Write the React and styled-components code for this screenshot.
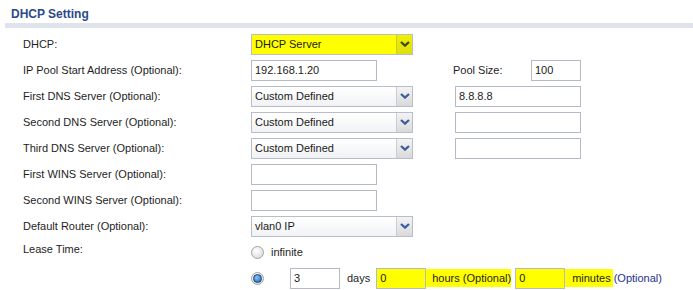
import * as React from "react"
import styled, { createGlobalStyle } from "styled-components"

const GlobalStyle = createGlobalStyle`
    body {
        margin: 0;
        background: #ffffff;
        font-family: "Liberation Sans", Arial, sans-serif;
        font-size: 11px;
        color: #1e1e1e;
    }
`

const Page = styled.div`
    width: 693px;
    height: 290px;
    overflow: hidden;
`

const Title = styled.div`
    height: 16px;
    padding: 7px 0 0 11px;
    font-size: 12px;
    line-height: 14px;
    font-weight: bold;
    color: #2b4a8c;
`

const TitleBar = styled.div`
    margin-left: 5px;
    height: 5px;
    background: #dfe3eb;
`

const Rows = styled.div`
    padding-top: 3px;
`

const Row = styled.div`
    display: flex;
    align-items: center;
    height: 26px;
`

const Label = styled.div`
    flex: 0 0 251px;
    box-sizing: border-box;
    padding-left: 23px;
    line-height: 13px;
    align-self: ${p => (p.$top ? `flex-start` : `center`)};
    padding-top: ${p => (p.$top ? `4px` : `0`)};
`

const ControlCell = styled.div`
    flex: 0 0 202px;
    display: flex;
    align-items: center;
`

const SideCell = styled.div`
    display: flex;
    align-items: center;
`

const SideLabel = styled.div`
    width: 78px;
`

const Input = styled.div`
    box-sizing: border-box;
    width: ${p => p.$w || 126}px;
    height: 21px;
    margin-left: ${p => p.$ml || 0}px;
    padding-left: 3px;
    display: flex;
    align-items: center;
    border: 1px solid #b5b9c9;
    background: ${p => (p.$hl ? `#ffff00` : `#ffffff`)};
    color: #1a1a1a;
`

const SelectBox = styled.div`
    box-sizing: border-box;
    width: 162px;
    height: 21px;
    display: flex;
    border: 1px solid #b8bccb;
    background: ${p =>
        p.$hl ? `#ffff00` : `linear-gradient(#ffffff, #f1f2f4)`};
`

const SelectValue = styled.div`
    flex: 1;
    display: flex;
    align-items: center;
    padding-left: 3px;
    color: #1a1a1a;
`

const SelectArrow = styled.div`
    width: 15px;
    display: flex;
    align-items: center;
    justify-content: center;
    border-left: 1px solid ${p => (p.$hl ? `#c9c930` : `#c9ccd6`)};
    background: ${p =>
        p.$hl
            ? `linear-gradient(#f0f000, #dede10)`
            : `linear-gradient(#f4f4f4, #d9d9d9)`};
`

const Radio = styled.span`
    box-sizing: border-box;
    width: 13px;
    height: 13px;
    border-radius: 50%;
    border: 1px solid #a4a4a4;
    background: radial-gradient(circle at 40% 35%, #ffffff, #d4d4d4);
    display: flex;
    align-items: center;
    justify-content: center;
    margin-right: ${p => p.$mr}px;
`

const RadioDot = styled.span`
    width: 7px;
    height: 7px;
    border-radius: 50%;
    border: 1px solid #203c60;
    background: radial-gradient(circle at 40% 35%, #7fc4ff, #1566b8);
`

const Text = styled.span`
    margin: 0 ${p => p.$mr || 0}px 0 ${p => p.$ml || 0}px;
    color: ${p => (p.$blue ? `#26318a` : `#1e1e1e`)};
`

const Highlight = styled.span`
    display: flex;
    align-items: center;
    height: 18px;
    background: #ffff00;
    padding-right: ${p => p.$pr || 0}px;
`

const Chevron = ({ color }) => (
    <svg width="10" height="6" viewBox="0 0 10 6">
        <path d="M1 1 L5 4.6 L9 1" fill="none" stroke={color} strokeWidth="2.3" />
    </svg>
)

const Select = ({ value, hl }) => (
    <SelectBox $hl={hl}>
        <SelectValue>{value}</SelectValue>
        <SelectArrow $hl={hl}>
            <Chevron color={hl ? `#3c4a14` : `#3d5e9e`} />
        </SelectArrow>
    </SelectBox>
)

const dnsRows = [
    { label: `First DNS Server (Optional):`, ip: `8.8.8.8` },
    { label: `Second DNS Server (Optional):`, ip: `` },
    { label: `Third DNS Server (Optional):`, ip: `` },
]

const App = () => {
    return (
        <>
            <GlobalStyle />
            <Page>
                <Title>DHCP Setting</Title>
                <TitleBar />
                <Rows>
                    <Row>
                        <Label>DHCP:</Label>
                        <ControlCell>
                            <Select value="DHCP Server" hl />
                        </ControlCell>
                    </Row>
                    <Row>
                        <Label>IP Pool Start Address (Optional):</Label>
                        <ControlCell>
                            <Input>192.168.1.20</Input>
                        </ControlCell>
                        <SideCell>
                            <SideLabel>Pool Size:</SideLabel>
                            <Input $w={50}>100</Input>
                        </SideCell>
                    </Row>
                    {dnsRows.map(r => (
                        <Row key={r.label}>
                            <Label>{r.label}</Label>
                            <ControlCell>
                                <Select value="Custom Defined" />
                            </ControlCell>
                            <SideCell>
                                <Input $ml={2}>{r.ip}</Input>
                            </SideCell>
                        </Row>
                    ))}
                    <Row>
                        <Label>First WINS Server (Optional):</Label>
                        <ControlCell>
                            <Input />
                        </ControlCell>
                    </Row>
                    <Row>
                        <Label>Second WINS Server (Optional):</Label>
                        <ControlCell>
                            <Input />
                        </ControlCell>
                    </Row>
                    <Row>
                        <Label>Default Router (Optional):</Label>
                        <ControlCell>
                            <Select value="vlan0 IP" />
                        </ControlCell>
                    </Row>
                    <Row>
                        <Label $top>Lease Time:</Label>
                        <ControlCell>
                            <Radio $mr={7} />
                            <Text>infinite</Text>
                        </ControlCell>
                    </Row>
                    <Row>
                        <Label />
                        <Radio $mr={26}>
                            <RadioDot />
                        </Radio>
                        <Input $w={50}>3</Input>
                        <Text $ml={7} $mr={6}>days</Text>
                        <Highlight>
                            <Input $w={50} $hl>0</Input>
                            <Text $ml={6}>hours (Optional)</Text>
                        </Highlight>
                        <Input $w={50} $ml={4} $hl>0</Input>
                        <Highlight $pr={2}>
                            <Text $ml={7}>minutes</Text>
                        </Highlight>
                        <Text $ml={1} $blue>(Optional)</Text>
                    </Row>
                </Rows>
            </Page>
        </>
    )
}

export default App
